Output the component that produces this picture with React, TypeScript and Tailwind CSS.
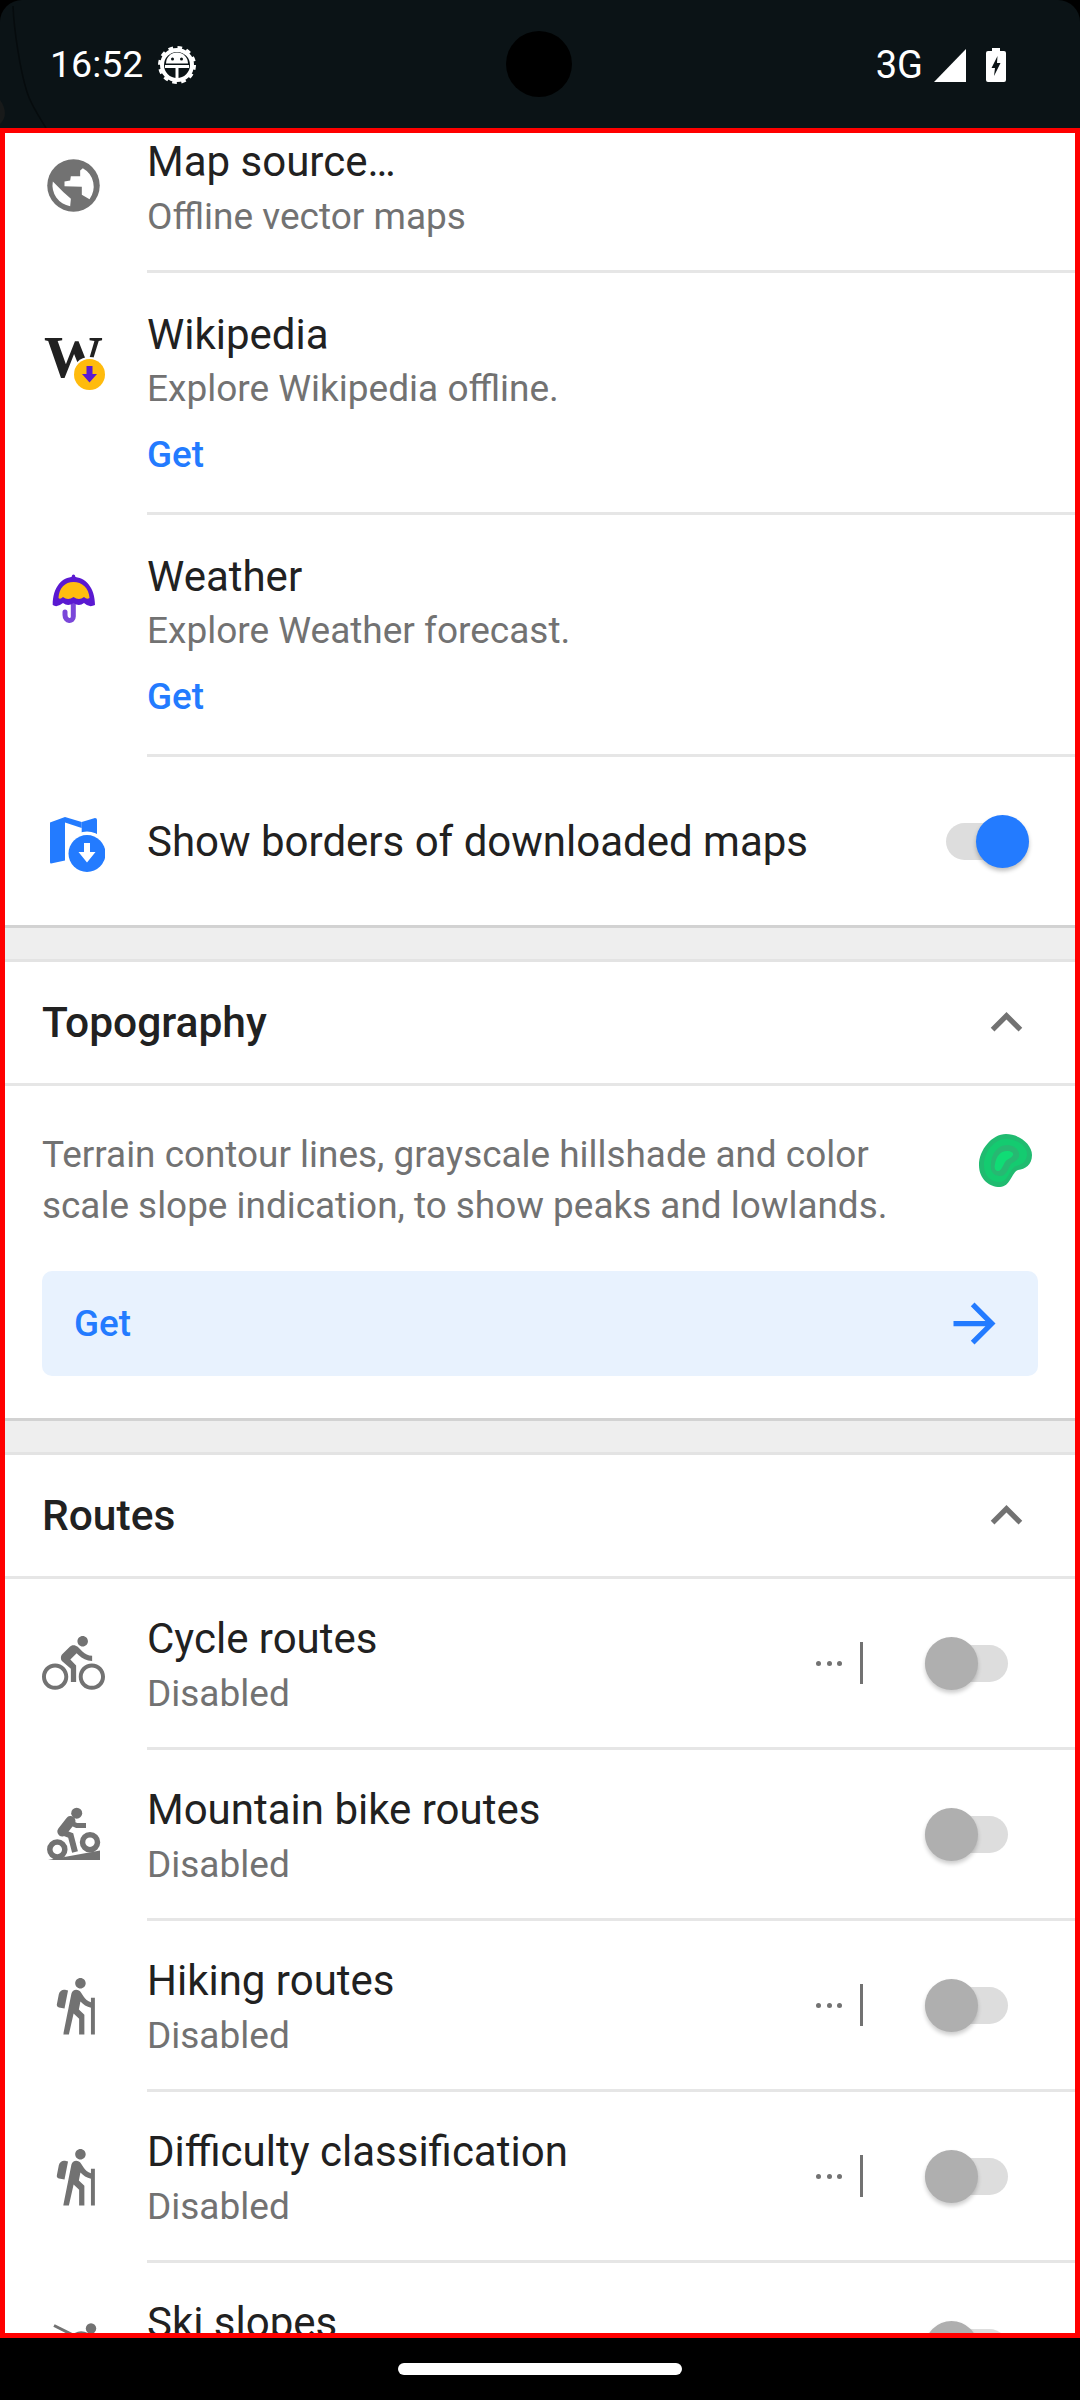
import React from "react";
import { MdDirectionsBike, MdHiking, MdExpandLess, MdArrowForward } from "react-icons/md";

const GREY = "#727272";

function Globe() {
  return (
    <svg width="63" height="63" viewBox="0 0 24 24">
      <circle cx="12" cy="12" r="10" fill={GREY} />
      <path d="M15.56 5.4 14.54 6.29V8.44H10.98L10.73 10.1 8.57 10.48V12.25L15.17 12.5V15.56L18.1 17.2A8 8 0 0 0 15.56 5.4Z" fill="#fff" />
      <path d="M4.13 10.48 8.2 14.54 11 17.08 10.73 19.87A8 8 0 0 1 4.13 10.48Z" fill="#fff" />
    </svg>
  );
}

function WikiIcon() {
  return (
    <div className="relative w-[63px] h-[63px]">
      <span className="absolute left-[2px] top-[-4px] text-[59px] leading-[63px] font-bold text-[#212121] font-['Liberation_Serif',serif]">W</span>
      <svg className="absolute left-[30px] top-[27px]" width="35" height="35" viewBox="0 0 35 35">
        <circle cx="17.5" cy="17.5" r="17.5" fill="#fff" />
        <circle cx="17.5" cy="17.5" r="15.5" fill="#ffbb0d" />
        <path d="M14.5 9h6v8h4.5l-7.5 8.5L10 17h4.5Z" fill="#5a19d1" />
      </svg>
    </div>
  );
}

function Umbrella() {
  return (
    <svg width="63" height="63" viewBox="0 0 63 63">
      <path d="M31.3 30V44.5C31.3 50 23 50 23 43V40" fill="none" stroke="#7a47d9" strokeWidth="5" strokeLinecap="round" />
      <rect x="29.8" y="2.5" width="3.4" height="6" rx="1.7" fill="#5a19d1" />
      <path d="M10.7 33C10.7 15 20 5 31.3 5C43 5 53 15 53 33Q47 36 42 31Q37 35 31.5 31Q26 35 21 31Q15 36 10.7 33Z" fill="#5a19d1" />
      <path d="M16.5 26C17 16 23 10 31.5 10C40 10 47 16 47.5 26Q45 28 42 25Q37 29 31.5 25Q26 29 21 25Q18 28 16.5 26Z" fill="#ffbe0f" />
    </svg>
  );
}

function MapIcon() {
  return (
    <svg width="63" height="63" viewBox="0 0 63 63">
      <path d="M8 12.5 23 7V50.5L9 53.5Q8 53.5 8 52Z" fill="#237bff" />
      <path d="M23 7 39.7 12V18L23 12.5Z" fill="#237bff" />
      <path d="M39.7 12 53 8Q55 8 55 10V24H39.7Z" fill="#237bff" />
      <circle cx="45" cy="43.5" r="22" fill="#fff" />
      <circle cx="45" cy="43.5" r="18.5" fill="#237bff" />
      <path d="M42 33h6v9h5.5L45 52.5 36.5 42H42Z" fill="#fff" />
    </svg>
  );
}

function MtbIcon() {
  return (
    <svg width="63" height="63" viewBox="0 0 63 63">
      <circle cx="34.7" cy="10.2" r="5.5" fill={GREY} />
      <circle cx="15.3" cy="46.5" r="7.5" fill="none" stroke={GREY} strokeWidth="5.5" />
      <circle cx="48" cy="39.2" r="7.5" fill="none" stroke={GREY} strokeWidth="5.5" />
      <path d="M6 57 58 47.5V57Z" fill={GREY} />
      <path d="M27.3 19.2 34.7 22.5H44" fill="none" stroke={GREY} strokeWidth="5" />
      <path d="M28.5 18 20.3 28.5" fill="none" stroke={GREY} strokeWidth="10" strokeLinecap="round" />
      <path d="M20.3 29.2 28.7 32.5 33 49" fill="none" stroke={GREY} strokeWidth="6" />
    </svg>
  );
}

function SkiIcon() {
  return (
    <svg width="63" height="63" viewBox="0 0 63 63">
      <circle cx="49" cy="12.5" r="5.2" fill={GREY} />
      <path d="M12 9.5 30 18.5" fill="none" stroke={GREY} strokeWidth="3" />
      <path d="M28 21Q36 12 46 17L40 34H28Z" fill={GREY} />
    </svg>
  );
}

function Blob() {
  return (
    <svg width="54" height="54" viewBox="0 0 54 54">
      <path d="M27 0C40 0 53 10 53 21C53 31 46 35 39 36C33 38 31 53 21 53C10 53 0 45 0 31C0 16 13 0 27 0Z" fill="#20bb70" />
      <path d="M27 5C38 5 48 12 48 20C48 28 42 31 37 32C31 34 29 48 21 48C12 48 5 42 5 31C5 18 15 5 27 5Z" fill="#14cb70" />
      <path d="M28 11C35 11 41 16 40 22C39 27 34 28 32 30C29 34 28 42 21 42C15 42 11 38 12 30C12 20 19 11 28 11Z" fill="#27b872" />
      <path d="M28 17C32 17 35 19 34 21C33 24 28 25 26 28C24 32 22 37 19 37C16 37 15 34 16 30C17 23 21 17 28 17Z" fill="#10dc75" />
    </svg>
  );
}

function Toggle({ on }: { on?: boolean }) {
  return on ? (
    <div className="relative w-[83px] h-[53px] mr-[46px] shrink-0 flex items-center">
      <div className="w-[83px] h-[37px] rounded-full bg-[#dddddd]" />
      <div className="absolute right-0 top-0 w-[53px] h-[53px] rounded-full bg-[#237bff] shadow-[0_3px_4px_rgba(0,0,0,0.25)]" />
    </div>
  ) : (
    <div className="relative w-[83px] h-[53px] mr-[67px] shrink-0 flex items-center">
      <div className="w-[83px] h-[37px] rounded-full bg-[#dddddd]" />
      <div className="absolute left-0 top-0 w-[53px] h-[53px] rounded-full bg-[#afafaf] shadow-[0_3px_4px_rgba(0,0,0,0.2)]" />
    </div>
  );
}

function Divider() {
  return <div className="ml-[142px] h-[3px] bg-[#e6e6e6]" />;
}

function Title({ children }: { children: React.ReactNode }) {
  return <div className="text-[42px] leading-[55px] text-[#212121]">{children}</div>;
}

function Sub({ children }: { children: React.ReactNode }) {
  return <div className="text-[37px] leading-[55px] text-[#727272]">{children}</div>;
}

function AppRow({ icon, title, sub }: { icon: React.ReactNode; title: string; sub: string }) {
  return (
    <div className="flex items-start h-[239px]">
      <div className="w-[63px] h-[63px] ml-[37px] mr-[42px] mt-[57px] shrink-0">{icon}</div>
      <div className="pt-[35px]">
        <div className="text-[42px] leading-[53px] text-[#212121]">{title}</div>
        <Sub>{sub}</Sub>
        <div className="mt-[11px] text-[36.75px] leading-[55px] font-medium text-[#237bff]">Get</div>
      </div>
    </div>
  );
}

function RouteRow({ icon, title, dots }: { icon: React.ReactNode; title: string; dots?: boolean }) {
  return (
    <div className="flex items-center h-[168px]">
      <div className="w-[63px] h-[63px] ml-[37px] mr-[42px] shrink-0">{icon}</div>
      <div className="flex-1 pt-[6px]">
        <Title>{title}</Title>
        <Sub>Disabled</Sub>
      </div>
      {dots && (
        <div className="flex items-center mr-[62px]">
          <div className="flex gap-[5.5px] mr-[18px]">
            <div className="w-[5px] h-[5px] rounded-full bg-[#727272]" />
            <div className="w-[5px] h-[5px] rounded-full bg-[#727272]" />
            <div className="w-[5px] h-[5px] rounded-full bg-[#727272]" />
          </div>
          <div className="w-[3px] h-[42px] bg-[#727272]" />
        </div>
      )}
      <Toggle />
    </div>
  );
}

function HikeIcon() {
  return (
    <div className="pl-[3px]">
      <MdHiking size={63} color={GREY} />
    </div>
  );
}

function Header({ title }: { title: string }) {
  return (
    <div className="flex items-center justify-between h-[121px] pl-[37px] pr-[37px] border-b-[3px] border-[#e6e6e6] box-content">
      <div className="text-[42.5px] font-medium text-[#212121]">{title}</div>
      <MdExpandLess size={63} color="#727272" />
    </div>
  );
}

function Gap() {
  return <div className="h-[37px] bg-[#eeeeee] border-t-[3px] border-b-[3px] border-t-[#d2d2d2] border-b-[#e3e3e3]" />;
}

function Gear() {
  return (
    <svg width="38" height="38" viewBox="0 0 38 38">
      <circle cx="19" cy="19" r="15" fill="none" stroke="#fff" strokeWidth="4" />
      <circle cx="19" cy="19" r="17" fill="none" stroke="#fff" strokeWidth="4" strokeDasharray="4.5 4.4" />
      <path d="M8 17.5A11 11 0 0 1 30 17.5Z" fill="#fff" />
      <path d="M7 20.500H31M19 20.500V32" fill="none" stroke="#fff" strokeWidth="3" />
      <circle cx="14.5" cy="13" r="1.5" fill="#0b1316" />
      <circle cx="23.5" cy="13" r="1.5" fill="#0b1316" />
    </svg>
  );
}

export default function App() {
  return (
    <div className="relative w-[1080px] h-[2400px] bg-black flex flex-col font-['Roboto',sans-serif]">
      <div className="relative h-[128px] bg-[#0b1316] rounded-t-[22px] flex items-center pl-[50px] pr-[74px] pt-[2px] text-white shrink-0">
        <svg className="absolute left-0 top-0" width="50" height="128" viewBox="0 0 50 128">
          <path d="M13 6C14 30 20 70 27 92C31 105 40 118 46 128" fill="none" stroke="#060b0d" strokeWidth="1.5" />
          <path d="M0 100C6 108 7 118 0 124Z" fill="#181a1a" />
        </svg>
        <span className="relative text-[37.5px] leading-none">16:52</span>
        <div className="ml-[15px] h-[38px]"><Gear /></div>
        <div className="absolute left-[506px] top-[31px] w-[66px] h-[66px] rounded-full bg-black" />
        <div className="flex-1" />
        <span className="text-[38px] leading-none">3G</span>
        <svg className="ml-[11px]" width="33" height="33" viewBox="0 0 33 33"><path d="M32 0V33H0Z" fill="#fff" /></svg>
        <svg className="ml-[19px]" width="20" height="34" viewBox="0 0 20 34">
          <path d="M6 0H14V3H18Q20 3 20 5V32Q20 34 18 34H2Q0 34 0 32V5Q0 3 2 3H6Z" fill="#fff" />
          <path d="M11.5 8 5.5 20H9L8 28 14.5 15H11Z" fill="#0b1316" />
        </svg>
      </div>

      <div className="h-[2210px] border-[5px] border-[#ff0000] overflow-hidden bg-white shrink-0">
        <div className="-mt-[32px]">
          <div className="flex items-center h-[169px]">
            <div className="w-[63px] h-[63px] ml-[37px] mr-[42px] shrink-0"><Globe /></div>
            <div className="pt-[6px]">
              <Title>Map source…</Title>
              <Sub>Offline vector maps</Sub>
            </div>
          </div>
          <Divider />
          <AppRow icon={<WikiIcon />} title="Wikipedia" sub="Explore Wikipedia offline." />
          <Divider />
          <AppRow icon={<Umbrella />} title="Weather" sub="Explore Weather forecast." />
          <Divider />
          <div className="flex items-center h-[168px]">
            <div className="w-[63px] h-[63px] ml-[37px] mr-[42px] shrink-0"><MapIcon /></div>
            <div className="flex-1"><Title>Show borders of downloaded maps</Title></div>
            <Toggle on />
          </div>
          <Gap />
          <Header title="Topography" />
          <div className="pl-[37px] pr-[37px] pt-[43px] pb-[42px]">
            <div className="flex justify-between">
              <div className="text-[36.9px] leading-[51px] text-[#727272]">
                Terrain contour lines, grayscale hillshade and color<br />
                scale slope indication, to show peaks and lowlands.
              </div>
              <div className="pt-[5px] pr-[5px]"><Blob /></div>
            </div>
            <div className="mt-[40px] h-[105px] rounded-[10px] bg-[#e8f2fe] flex items-center justify-between pl-[32px] pr-[32px]">
              <span className="text-[36.75px] font-medium text-[#237bff]">Get</span>
              <MdArrowForward size={63} color="#237bff" />
            </div>
          </div>
          <Gap />
          <Header title="Routes" />
          <RouteRow icon={<MdDirectionsBike size={63} color={GREY} />} title="Cycle routes" dots />
          <Divider />
          <RouteRow icon={<MtbIcon />} title="Mountain bike routes" />
          <Divider />
          <RouteRow icon={<HikeIcon />} title="Hiking routes" dots />
          <Divider />
          <RouteRow icon={<HikeIcon />} title="Difficulty classification" dots />
          <Divider />
          <RouteRow icon={<SkiIcon />} title="Ski slopes" />
        </div>
      </div>

      <div className="flex-1 flex items-center justify-center">
        <div className="w-[284px] h-[12px] rounded-full bg-white" />
      </div>
    </div>
  );
}
